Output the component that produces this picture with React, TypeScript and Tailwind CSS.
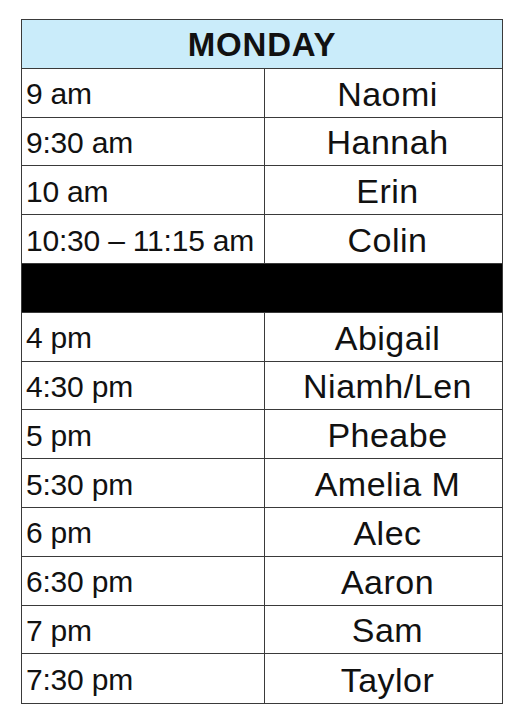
import React from "react";

const before = [
  ["9 am", "Naomi"],
  ["9:30 am", "Hannah"],
  ["10 am", "Erin"],
  ["10:30 – 11:15 am", "Colin"],
];
const after = [
  ["4 pm", "Abigail"],
  ["4:30 pm", "Niamh/Len"],
  ["5 pm", "Pheabe"],
  ["5:30 pm", "Amelia M"],
  ["6 pm", "Alec"],
  ["6:30 pm", "Aaron"],
  ["7 pm", "Sam"],
  ["7:30 pm", "Taylor"],
];

function Row({ t, n, last }: { t: string; n: string; last?: boolean }) {
  return (
    <div
      className={`grid grid-cols-[243px_1fr] h-[48.8px] ${last ? "" : "border-b border-[#3a3a3a]"}`}
    >
      <div className="border-r border-[#3a3a3a] flex items-center pl-[4px] pt-[3px] text-[30px] leading-none text-[#111] whitespace-nowrap tracking-[-0.2px]">
        {t}
      </div>
      <div className="flex items-center justify-center pl-[8px] pt-[2px] text-[34px] leading-none text-[#111] tracking-[0.5px]">
        {n}
      </div>
    </div>
  );
}

export default function App() {
  return (
    <div
      className="w-[529px] h-[720px] bg-white pt-[19px] pl-[21px]"
      style={{ fontFamily: '"Liberation Sans", Arial, sans-serif' }}
    >
      <div className="w-[482px] border border-[#3a3a3a]">
        <div className="h-[48.8px] bg-[#caecfa] border-b border-[#3a3a3a] flex items-center justify-center pt-[2px] text-[33px] font-bold leading-none text-[#111] tracking-[0.8px]">
          MONDAY
        </div>
        {before.map(([t, n]) => (
          <Row key={t} t={t} n={n} />
        ))}
        <div className="h-[48.8px] bg-black border-b border-[#3a3a3a]" />
        {after.map(([t, n], i) => (
          <Row key={t} t={t} n={n} last={i === after.length - 1} />
        ))}
      </div>
    </div>
  );
}
